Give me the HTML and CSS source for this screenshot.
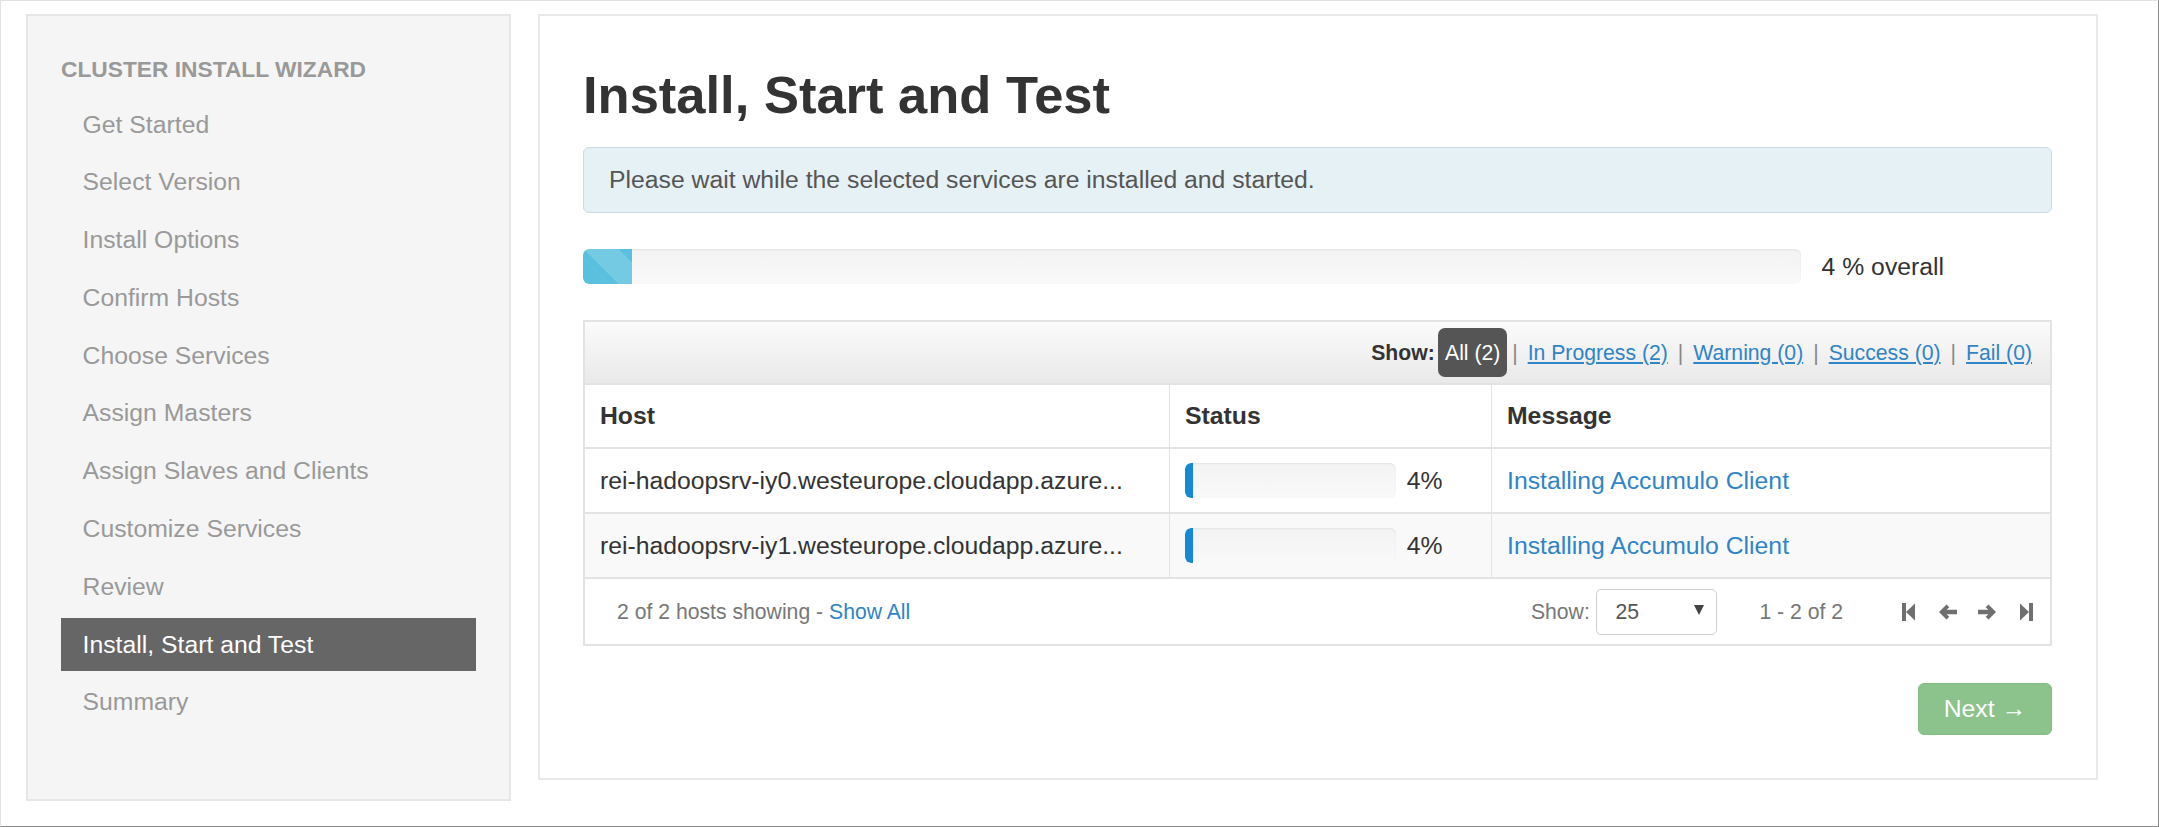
FILE: index.html
```html
<!DOCTYPE html>
<html lang="en">
<head>
<meta charset="utf-8">
<title>Cluster Install Wizard</title>
<link rel="stylesheet" href="styles.css">
</head>
<body>
<div class="window">
  <aside class="sidebar">
    <div class="nav-header">Cluster Install Wizard</div>
    <ul class="nav-list">
      <li>Get Started</li>
      <li>Select Version</li>
      <li>Install Options</li>
      <li>Confirm Hosts</li>
      <li>Choose Services</li>
      <li>Assign Masters</li>
      <li>Assign Slaves and Clients</li>
      <li>Customize Services</li>
      <li>Review</li>
      <li class="active">Install, Start and Test</li>
      <li>Summary</li>
    </ul>
  </aside>

  <main class="panel">
    <h2 class="title">Install, Start and Test</h2>
    <div class="alert">Please wait while the selected services are installed and started.</div>

    <div class="overall">
      <div class="progress"><div class="progress-fill" style="width:4%"></div></div>
      <span class="overall-label">4 % overall</span>
    </div>

    <div class="hosts">
      <div class="filter-bar">
        <span class="filter-label">Show:</span>
        <span class="badge">All (2)</span>
        <span class="sep sep-first">|</span>
        <a class="filter-link">In Progress (2)</a>
        <span class="sep">|</span>
        <a class="filter-link">Warning (0)</a>
        <span class="sep">|</span>
        <a class="filter-link">Success (0)</a>
        <span class="sep">|</span>
        <a class="filter-link">Fail (0)</a>
      </div>

      <div class="row head">
        <div class="cell">Host</div>
        <div class="cell">Status</div>
        <div class="cell">Message</div>
      </div>
      <div class="row">
        <div class="cell">rei-hadoopsrv-iy0.westeurope.cloudapp.azure...</div>
        <div class="cell status">
          <div class="mini-bar"><div class="mini-fill" style="width:4%"></div></div>
          <span class="pct">4%</span>
        </div>
        <div class="cell"><a class="msg">Installing Accumulo Client</a></div>
      </div>
      <div class="row alt">
        <div class="cell">rei-hadoopsrv-iy1.westeurope.cloudapp.azure...</div>
        <div class="cell status">
          <div class="mini-bar"><div class="mini-fill" style="width:4%"></div></div>
          <span class="pct">4%</span>
        </div>
        <div class="cell"><a class="msg">Installing Accumulo Client</a></div>
      </div>

      <div class="table-footer">
        <div class="showing">2 of 2 hosts showing - <a class="link">Show All</a></div>
        <div class="pager">
          <span class="pager-label">Show:</span>
          <div class="select"><span>25</span><span class="caret"></span></div>
          <span class="range">1 - 2 of 2</span>
          <div class="pager-icons">
            <svg class="icon" viewBox="0 0 20 20" width="20" height="20"><rect x="3" y="1" width="4" height="18"/><polygon points="16,1.5 16,18.5 7,10"/></svg>
            <svg class="icon" viewBox="0 0 20 20" width="20" height="20"><polygon points="8.5,2.5 1,10 8.5,17.5 11.3,14.7 8.6,12.2 19,12.2 19,7.8 8.6,7.8 11.3,5.3"/></svg>
            <svg class="icon" viewBox="0 0 20 20" width="20" height="20"><polygon points="11.5,2.5 19,10 11.5,17.5 8.7,14.7 11.4,12.2 1,12.2 1,7.8 11.4,7.8 8.7,5.3"/></svg>
            <svg class="icon" viewBox="0 0 20 20" width="20" height="20"><rect x="13" y="1" width="4" height="18"/><polygon points="4,1.5 4,18.5 13,10"/></svg>
          </div>
        </div>
      </div>
    </div>

    <div class="actions">
      <button class="btn-next" type="button">Next &rarr;</button>
    </div>
  </main>
</div>
</body>
</html>
```

FILE: styles.css
```css
* { box-sizing: border-box; }

html, body {
  margin: 0;
  padding: 0;
  background: #fff;
}

body {
  font-family: "Liberation Sans", Arial, sans-serif;
  font-size: 24.75px;
  color: #333;
}

.window {
  width: 2159px;
  height: 827px;
  border-top: 1px solid #e2e2e2;
  border-left: 1px solid #e2e2e2;
  border-right: 1px solid #8a8a8a;
  border-bottom: 1px solid #8a8a8a;
  display: flex;
  align-items: flex-start;
  gap: 27px;
  padding: 13px 0 0 25px;
}

/* Sidebar */
.sidebar {
  width: 485px;
  height: 787px;
  flex: none;
  background: #f5f5f5;
  border: 2px solid #e6e6e6;
  padding: 37.5px 33px 0 33px;
}

.nav-header {
  font-size: 22.75px;
  font-weight: bold;
  text-transform: uppercase;
  color: #999;
  line-height: 31px;
  margin-bottom: 13px;
}

.nav-list {
  list-style: none;
  margin: 0;
  padding: 0;
}

.nav-list li {
  height: 53px;
  line-height: 53px;
  padding-left: 21.6px;
  margin-bottom: 4.8px;
  color: #999;
  white-space: nowrap;
}

.nav-list li.active {
  background: #666;
  color: #fff;
}

/* Main panel */
.panel {
  width: 1560px;
  height: 766px;
  flex: none;
  background: #fff;
  border: 2px solid #e8e8e8;
  padding: 49.5px 44px 0 43px;
}

.title {
  margin: 0 0 23.5px;
  font-size: 52.5px;
  line-height: 58px;
  font-weight: bold;
  color: #333;
}

.alert {
  height: 66px;
  display: flex;
  align-items: center;
  padding: 0 25px;
  background: #e6f1f6;
  border: 1px solid #c7dce6;
  border-radius: 6px;
  color: #555;
}

.overall {
  margin-top: 36px;
  height: 35px;
  display: flex;
  align-items: center;
}

.progress {
  width: 1218px;
  height: 35px;
  border-radius: 6px;
  background: linear-gradient(#f3f3f3, #f9f9f9);
  box-shadow: inset 0 1px 2px rgba(0,0,0,0.08);
  overflow: hidden;
}

.progress-fill {
  height: 100%;
  border-radius: 6px 0 0 6px;
  background-color: #5bc0de;
  background-image: linear-gradient(45deg,
    rgba(255,255,255,0.16) 25%, transparent 25%,
    transparent 50%, rgba(255,255,255,0.16) 50%,
    rgba(255,255,255,0.16) 75%, transparent 75%, transparent);
  background-size: 70px 70px;
}

.overall-label {
  margin-left: 20.6px;
  color: #333;
}

/* Hosts table */
.hosts {
  margin-top: 36px;
  border: 2px solid #e3e3e3;
}

.filter-bar {
  height: 63px;
  border-bottom: 2px solid #e3e3e3;
  background: linear-gradient(#fbfbfb, #e9e9e9);
  display: flex;
  align-items: center;
  justify-content: flex-end;
  padding-right: 18px;
  font-size: 21.2px;
}

.filter-label {
  font-weight: bold;
  color: #333;
}

.badge {
  margin-left: 3.5px;
  height: 49px;
  line-height: 49px;
  padding: 0 6.8px;
  background: #555;
  color: #fff;
  border-radius: 7px;
}

.sep {
  color: #888;
  margin: 0 10px;
}

.sep-first {
  margin-left: 5px;
}

.filter-link {
  color: #2f84c7;
  text-decoration: underline;
}

.row {
  display: grid;
  grid-template-columns: 585px 322px 1fr;
  height: 65px;
  border-bottom: 2px solid #e3e3e3;
  background: #fff;
}

.row.head {
  height: 64px;
  font-weight: bold;
  color: #333;
}

.row.alt {
  background: #f9f9f9;
}

.cell {
  display: flex;
  align-items: center;
  padding-left: 15px;
  border-right: 1px solid #e3e3e3;
  white-space: nowrap;
  overflow: hidden;
}

.cell:last-child {
  border-right: none;
}

.mini-bar {
  width: 211px;
  height: 35px;
  border-radius: 6px;
  background: linear-gradient(#f3f3f3, #f9f9f9);
  box-shadow: inset 0 1px 2px rgba(0,0,0,0.07);
  overflow: hidden;
  flex: none;
}

.mini-fill {
  height: 100%;
  background: #1689d6;
  border-radius: 6px 0 0 6px;
}

.pct {
  margin-left: 10.7px;
  color: #333;
}

.msg, .link {
  color: #2f84c7;
  text-decoration: none;
}

.table-footer {
  height: 65px;
  display: flex;
  align-items: center;
  justify-content: space-between;
  padding: 0 14px 0 32px;
  font-size: 21.2px;
  color: #777;
}

.pager {
  display: flex;
  align-items: center;
}

.select {
  margin-left: 6.6px;
  width: 121px;
  height: 46px;
  border: 1px solid #cfcfcf;
  border-radius: 5px;
  background: #fff;
  display: flex;
  align-items: center;
  justify-content: space-between;
  padding: 0 12px 0 18px;
  color: #555;
}

.caret {
  width: 0;
  height: 0;
  border-left: 5px solid transparent;
  border-right: 5px solid transparent;
  border-top: 10px solid #444;
  margin-top: -4px;
}

.range {
  margin-left: 42px;
}

.pager-icons {
  margin-left: 56px;
  display: flex;
  align-items: center;
  gap: 19px;
}

.icon {
  display: block;
  fill: #6f6f6f;
}

.actions {
  margin-top: 37px;
  display: flex;
  justify-content: flex-end;
}

.btn-next {
  width: 134px;
  height: 52px;
  border: 1px solid #84bd84;
  border-radius: 6px;
  background: #8cc38d;
  color: #fff;
  font-family: "Liberation Sans", Arial, sans-serif;
  font-size: 24.75px;
  padding: 0;
}
```
